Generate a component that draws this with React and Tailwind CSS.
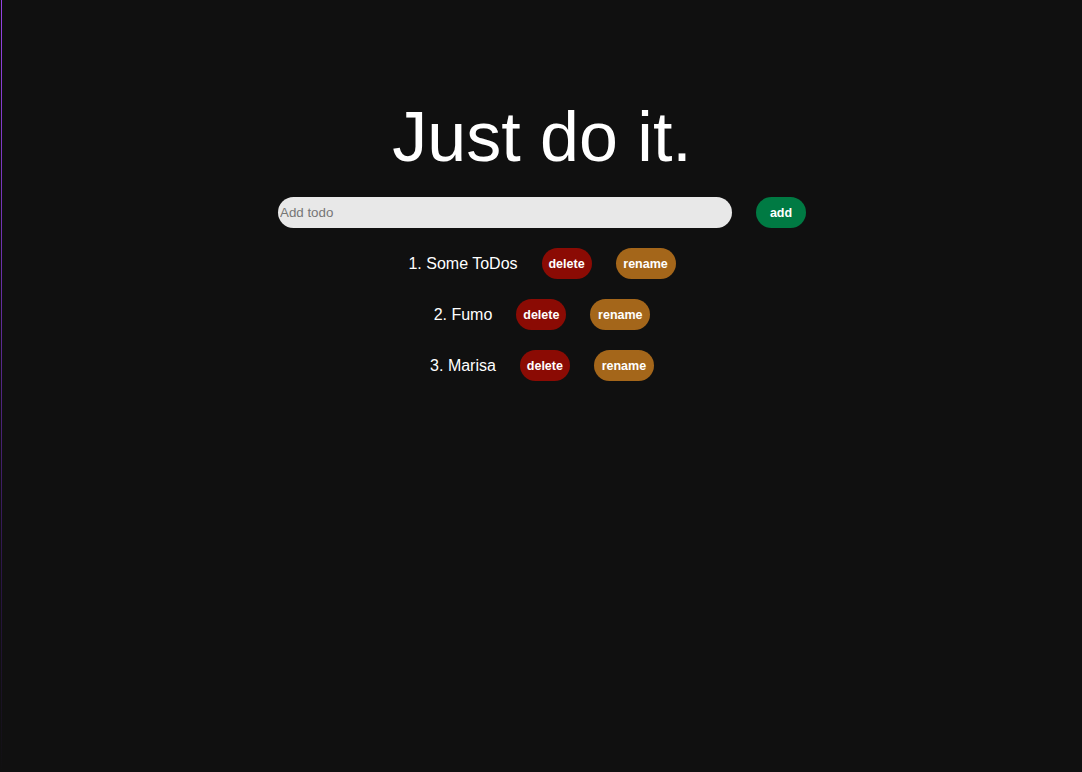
import { useState } from "react";

const font = { fontFamily: '"Liberation Sans", Arial, sans-serif' };

function TodoRow({ index, title }) {
  return (
    <li className="flex h-[31px] items-center justify-center gap-6">
      <span className="text-base text-white">
        {index}. {title}
      </span>
      <button className="h-[31px] w-[50px] rounded-full bg-[#8b0b04] pt-px text-[12.5px] font-bold text-white">
        delete
      </button>
      <button className="h-[31px] w-[60px] rounded-full bg-[#a4661a] pt-px text-[12.5px] font-bold text-white">
        rename
      </button>
    </li>
  );
}

export default function App() {
  const [todos] = useState(["Some ToDos", "Fumo", "Marisa"]);
  const [text, setText] = useState("");

  return (
    <div className="relative min-h-[772px] bg-[#101010]" style={font}>
      <div className="absolute left-px top-0 h-full w-px bg-[linear-gradient(to_bottom,#9543e3_0%,#6a30a8_35%,#2a1545_75%,#101010_100%)]" />
      <div className="flex flex-col items-center pl-[2px] pt-[96px]">
        <h1 className="text-[70px] leading-[83px] text-white">Just do it.</h1>
        <div className="mt-[18px] flex items-center gap-6">
          <input
            value={text}
            onChange={(e) => setText(e.target.value)}
            placeholder="Add todo"
            className="h-[31px] w-[454px] rounded-full bg-[#e8e8e8] pl-[2px] text-[13.33px] text-black outline-none placeholder:text-[#767676]"
          />
          <button className="h-[31px] w-[50px] rounded-full bg-[#007a43] pt-px text-[12.5px] font-bold text-white">
            add
          </button>
        </div>
        <ol className="mt-5 flex flex-col gap-5">
          {todos.map((t, i) => (
            <TodoRow key={t} index={i + 1} title={t} />
          ))}
        </ol>
      </div>
    </div>
  );
}
